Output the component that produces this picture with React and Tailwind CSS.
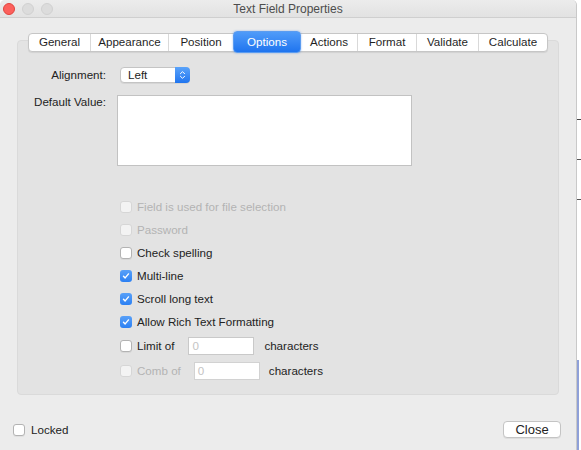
import React from "react";

const tabs = [
  { label: "General", w: "w-[61px]" },
  { label: "Appearance", w: "w-[78px]" },
  { label: "Position", w: "w-[65px]" },
  { label: "Options", w: "w-[68px]", active: true },
  { label: "Actions", w: "w-[56px]" },
  { label: "Format", w: "w-[59px]" },
  { label: "Validate", w: "w-[62px]" },
  { label: "Calculate", w: "w-[69px]" },
];

const options = [
  { label: "Field is used for file selection", disabled: true },
  { label: "Password", disabled: true },
  { label: "Check spelling" },
  { label: "Multi-line", checked: true },
  { label: "Scroll long text", checked: true },
  { label: "Allow Rich Text Formatting", checked: true },
];

function Checkbox({ checked, disabled }) {
  if (checked) {
    return (
      <span className="flex h-[12px] w-[12px] items-center justify-center rounded-[3px] bg-gradient-to-b from-[#58a0f8] to-[#2b80f3]">
        <svg viewBox="0 0 12 12" className="h-[10px] w-[10px]">
          <path d="M3 6.2l2 2.1 4-4.8" fill="none" stroke="#fff" strokeWidth="1.7" strokeLinecap="round" strokeLinejoin="round" />
        </svg>
      </span>
    );
  }
  return (
    <span
      className={`h-[12px] w-[12px] rounded-[3px] border ${
        disabled ? "border-[#d6d6d6] bg-[#f3f3f3]" : "border-[#b3b3b3] bg-white shadow-[0_1px_0_rgba(0,0,0,0.05)]"
      }`}
    />
  );
}

export default function App() {
  return (
    <div
      className="flex h-[450px] w-[581px] overflow-hidden bg-white text-[11.6px] text-[#222]"
      style={{ fontFamily: '"Liberation Sans", Arial, sans-serif' }}
    >
      <div className="flex w-[577px] flex-col rounded-t-[5px] border-r border-[#c9c9c9] bg-[#ececec]">
        {/* title bar */}
        <div className="relative flex h-[18px] items-center justify-center rounded-t-[5px] border-b border-[#cfcfcf] bg-gradient-to-b from-[#ececec] to-[#e2e2e2]">
          <div className="absolute left-[3px] top-[3px] flex gap-[7px]">
            <span className="h-[12px] w-[12px] rounded-full border border-[#e0443e] bg-[#fc605c]" />
            <span className="h-[12px] w-[12px] rounded-full border border-[#d1d1d1] bg-[#dcdcdc]" />
            <span className="h-[12px] w-[12px] rounded-full border border-[#d1d1d1] bg-[#dcdcdc]" />
          </div>
          <span className="text-[12px] text-[#4d4d4d]">Text Field Properties</span>
        </div>

        {/* tabs + panel */}
        <div className="flex flex-col px-[17px] pt-[13px]">
          <div className="relative z-10 flex h-[22px] items-center justify-center">
            <div className="flex h-[19px] items-center rounded-[4px] border border-[#c6c6c6] bg-white shadow-[0_1px_1px_rgba(0,0,0,0.08)]">
              {tabs.map((t, i) =>
                t.active ? (
                  <div
                    key={t.label}
                    className={`${t.w} -my-[3px] flex h-[22px] items-center justify-center rounded-[4px] border border-[#5b9cf0] bg-gradient-to-b from-[#4f9bf9] to-[#1e74ef] text-white shadow-[0_0_2px_rgba(40,120,240,0.5)]`}
                  >
                    {t.label}
                  </div>
                ) : (
                  <div
                    key={t.label}
                    className={`${t.w} flex h-full items-center justify-center text-[#1f1f1f] ${
                      i > 0 && !tabs[i - 1].active ? "border-l border-[#d9d9d9]" : ""
                    }`}
                  >
                    {t.label}
                  </div>
                )
              )}
            </div>
          </div>

          <div className="-mt-[13px] flex h-[355px] flex-col rounded-[4px] border border-[#dadada] bg-[#e3e3e3] pt-[26px]">
            <div className="flex h-[16px] items-center">
              <span className="w-[88px] text-right">Alignment:</span>
              <div className="ml-[14px] flex h-[16px] w-[70px] items-center rounded-[4px] border border-[#c4c4c4] bg-white shadow-[0_1px_0_rgba(0,0,0,0.06)]">
                <span className="flex-1 pl-[7px]">Left</span>
                <span className="flex h-[16px] w-[15px] -mr-px -my-px items-center justify-center rounded-r-[4px] bg-gradient-to-b from-[#5aa3fa] to-[#1f75ef]">
                  <svg viewBox="0 0 8 12" className="h-[10px] w-[7px]">
                    <path d="M1.5 4.5L4 2l2.5 2.5M1.5 7.5L4 10l2.5-2.5" fill="none" stroke="#fff" strokeWidth="1.2" strokeLinecap="round" strokeLinejoin="round" />
                  </svg>
                </span>
              </div>
            </div>

            <div className="mt-[12px] flex items-start">
              <span className="w-[88px] text-right leading-[14px]">Default Value:</span>
              <div className="ml-[11px] h-[71px] w-[295px] border border-[#c2c2c2] bg-white" />
            </div>

            <div className="mt-[29px] flex flex-col pl-[102px]">
              {options.map((o) => (
                <div key={o.label} className="flex h-[23px] items-center gap-[5px]">
                  <Checkbox checked={o.checked} disabled={o.disabled} />
                  <span className={o.disabled ? "text-[#b3b3b3]" : "text-[#222]"}>{o.label}</span>
                </div>
              ))}
              <div className="flex h-[25px] items-center">
                <Checkbox />
                <span className="ml-[5px]">Limit of</span>
                <div className="ml-[14px] flex h-[18px] w-[66px] items-center border border-[#c9c9c9] bg-white pl-[3px] text-[#c4c4c4]">0</div>
                <span className="ml-[10px]">characters</span>
              </div>
              <div className="flex h-[25px] items-center">
                <Checkbox disabled />
                <span className="ml-[5px] text-[#b3b3b3]">Comb of</span>
                <div className="ml-[13px] flex h-[18px] w-[66px] items-center border border-[#d2d2d2] bg-white pl-[3px] text-[#c4c4c4]">0</div>
                <span className="ml-[9px]">characters</span>
              </div>
            </div>
          </div>
        </div>

        {/* footer */}
        <div className="mt-[26px] flex items-center justify-between pl-[13px] pr-[15px]">
          <div className="flex items-center gap-[6px]">
            <Checkbox />
            <span>Locked</span>
          </div>
          <button className="flex h-[17px] w-[58px] items-center justify-center rounded-[4px] border border-[#c4c4c4] bg-white text-[13px] text-[#222] shadow-[0_1px_0_rgba(0,0,0,0.06)]">
            Close
          </button>
        </div>
      </div>

      {/* sliver of the app behind */}
      <div className="flex flex-1 flex-col bg-white">
        <div className="h-[120px] border-b border-[#444]" />
        <div className="h-[40px] border-b border-[#555]" />
        <div className="h-[40px] border-b border-[#555]" />
        <div className="mt-[160px] flex-1 border-l-2 border-[#8fa0d8]" />
      </div>
    </div>
  );
}
